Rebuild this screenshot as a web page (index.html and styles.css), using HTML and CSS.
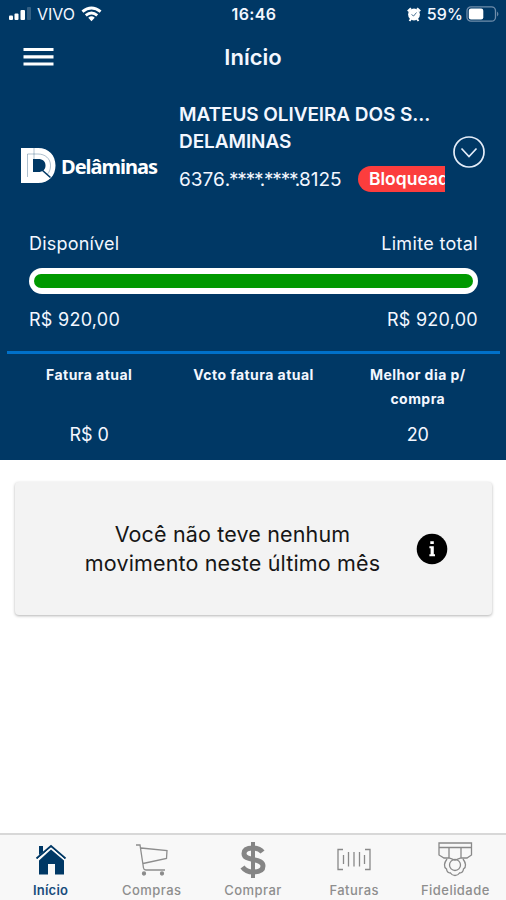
FILE: index.html
```html
<!DOCTYPE html>
<html lang="pt-BR">
<head>
<meta charset="utf-8">
<meta name="viewport" content="width=device-width, initial-scale=1">
<title>Início</title>
<link rel="stylesheet" href="styles.css">
</head>
<body>
<div class="app">
  <header class="hero">
    <div class="status">
      <div class="status-left">
        <svg width="24" height="14" viewBox="0 0 24 14" fill="#fff"><rect x="1" y="8.5" width="4" height="4.5" rx="1"/><rect x="6.5" y="6.5" width="4" height="6.5" rx="1"/><rect x="12.5" y="3" width="4.5" height="10" rx="1"/><rect x="19" y="0" width="4" height="13" rx="1" opacity=".2"/></svg>
        <span class="carrier">VIVO</span>
        <svg class="wifi" width="21" height="16" viewBox="0 0 22 16" fill="none" stroke="#fff" stroke-width="3"><path d="M1.500 5.600Q11-2.200 20.500 5.600"/><path d="M5 9.500Q11 4.400 17 9.500"/><path d="M7.600 11.800Q11 9 14.400 11.800L11 15.500Z" fill="#fff" stroke="none"/></svg>
      </div>
      <span class="time">16:46</span>
      <div class="status-right">
        <svg width="14" height="15" viewBox="0 0 14 15"><circle cx="7" cy="7.500" r="5.900" fill="#fff"/><path d="M.8 4.200L4 1.200M13.200 4.200L10 1.200M2.500 14L4 12M11.500 14L10 12" stroke="#fff" stroke-width="2"/><path d="M4.500 7.500L6.600 9L9.500 5.500" fill="none" stroke="#003865" stroke-width=".7"/></svg>
        <span class="percent">59%</span>
        <svg width="34" height="16" viewBox="0 0 34 16"><rect x="1" y=".8" width="28.500" height="14.400" rx="4" fill="none" stroke="#6f8dab" stroke-width="1.300"/><rect x="2.800" y="2.600" width="14.500" height="10.800" rx="2.200" fill="#fff"/><path d="M31.200 5.500Q33.500 8 31.200 10.500Z" fill="#8098b2"/></svg>
      </div>
    </div>
    <div class="titlebar">
      <svg width="31" height="20" viewBox="0 0 31 20" fill="#fff"><path d="M.5 1h30v3.100H.5zM.5 8.300h30v3.100H.5zM.5 15.500h30v3.100H.5z"/></svg>
      <h1>Início</h1>
    </div>
    <section class="account">
      <div class="brand">
        <svg width="35" height="36" viewBox="0 0 35 36"><path fill="#fff" fill-rule="evenodd" d="M0 0H17C28 0 34.500 7.500 34.500 17.500S28 35 17 35H0ZM12 11V24H17C22 24 24.500 21.500 24.500 17.500S22 11 17 11Z"/><path d="M13 0V11M6.500 29V6H17C24 6 29.500 10.500 29.500 17.500C29.500 21 28.500 24 26.500 26" fill="none" stroke="#003865" stroke-width=".8" opacity=".4"/><path d="M21 22L29.500 29.500" stroke="#003865" stroke-width="1.600"/></svg>
        <span>Delâminas</span>
      </div>
      <div class="holder">
        <strong>MATEUS OLIVEIRA DOS S...</strong>
        <strong>DELAMINAS</strong>
        <div class="card-row"><span class="number">6376<span class="mask">.****.****.</span>8125</span><span class="badge">Bloqueado</span></div>
      </div>
      <svg class="expand" width="34" height="34" viewBox="0 0 34 34" fill="none" stroke="#e4edf9" stroke-width="1.700"><circle cx="17" cy="17" r="15"/><path d="M9.500 13.500L17 21.500L24.500 13.500"/></svg>
    </section>
    <section class="limits">
      <div class="pair"><span>Disponível</span><span class="total">Limite total</span></div>
      <div class="track"><div class="fill"></div></div>
      <div class="pair amounts"><span>R$ 920,00</span><span>R$ 920,00</span></div>
    </section>
    <section class="invoice">
      <div><b>Fatura atual</b><span>R$ 0</span></div>
      <div><b>Vcto fatura atual</b><span></span></div>
      <div><b>Melhor dia p/ compra</b><span>20</span></div>
    </section>
  </header>
  <main>
    <div class="notice">
      <p>Você não teve nenhum<br>movimento neste último mês</p>
      <svg width="32" height="32" viewBox="0 0 32 32"><circle cx="16" cy="16" r="15.300" fill="#000"/><path fill="#fff" d="M14.300 8.300h3.500v2.800h-3.500zM13.400 13.200h4.400v8h1.200v2h-5.600v-2h1.200v-6h-1.200z"/></svg>
    </div>
  </main>
  <nav class="tabs">
    <a class="active">
      <svg width="36" height="38" viewBox="0 0 36 38"><path fill="#003865" d="M6 5h4v6L6 14zM18 8.500L31 19.500V33.500H22V23H15V33.500H6V19.500Z"/><path d="M3.500 17.500L18 5L32.500 17.500" fill="none" stroke="#003865" stroke-width="2"/><path d="M4 19L18 7L32 19" fill="none" stroke="#fff" stroke-width="1"/></svg>
      <span>Início</span></a>
    <a>
      <svg width="36" height="38" viewBox="0 0 36 38" fill="none" stroke="#8d8d8d" stroke-width="1.300"><path d="M2 4H6L9.500 27Q9.800 29 12 29H31M7 7L33 9.500L32.500 17.500L9 22.500"/><circle cx="10" cy="32.500" r="1.500" fill="#888"/><circle cx="28" cy="32.500" r="1.500" fill="#888"/></svg>
      <span>Compras</span></a>
    <a>
      <svg width="36" height="38" viewBox="0 0 36 38" fill="none" stroke="#858585" stroke-width="5"><path d="M27.500 11Q24.500 7 18 7C12 7 9 9 9 12.500C9 16.500 13 17.500 18 18.500C24 19.700 28 21 28 25C28 29 24 31 18 31Q11 31 7.500 26"/><path d="M18 1V37" stroke-width="4"/></svg>
      <span>Comprar</span></a>
    <a>
      <svg width="36" height="38" viewBox="0 0 36 38" fill="none" stroke="#898989" stroke-width="1.300"><path d="M7 8.500H2V28.500H7M29 8.500H34V28.500H29M7.500 14V23M12.500 11V25.500M18 11V25.500M23.500 11V25.500M28.500 14V23"/></svg>
      <span>Faturas</span></a>
    <a>
      <svg width="36" height="38" viewBox="0 0 36 38" fill="none" stroke="#898989" stroke-width="1.300"><path d="M2 2H34.500V14L30 17H24L18 19L12 17H7L2 14ZM2 6.500H34.500M12 6.500V17M24 6.500V17"/><path d="M10 18C7 22 6.500 26 9.500 28Q10 32 13.500 32Q15 34.500 18 34.500Q21 34.500 22.500 32Q26 32 26.500 28C29.500 26 29 22 26 18"/><circle cx="18" cy="24" r="5.500"/></svg>
      <span>Fidelidade</span></a>
  </nav>
</div>
</body>
</html>
```

FILE: styles.css
```css
* { box-sizing: border-box; }
body { margin: 0; font-family: Inter, "Liberation Sans", sans-serif; background: #fff; }
svg { display: block; flex: none; }
.app { height: 900px; display: flex; flex-direction: column; overflow: hidden; }
.hero { background: #003865; color: #f3f7ff; height: 460px; flex: none; }
.status { height: 28px; display: grid; grid-template-columns: 1fr auto 1fr; align-items: center; padding: 0 6px 0 8px; font-size: 17px; }
.status-left, .status-right { display: flex; align-items: center; }
.status-right { justify-content: flex-end; }
.carrier { margin-left: 5px; font-size: 16px; letter-spacing: 0; }
.wifi { margin-left: 6px; }
.time { font-weight: 600; font-size: 16px; letter-spacing: .4px; }
.percent { margin: 0 3px 0 6px; font-size: 16px; font-weight: 500; letter-spacing: .1px; }
.titlebar { height: 58px; display: grid; grid-template-columns: 1fr auto 1fr; align-items: center; padding: 0 23px; }
h1 { margin: 0; font-size: 22px; font-weight: 600; }
.account { height: 142px; display: flex; padding: 15px 20px 0 21px; }
.brand { width: 158px; display: flex; align-items: center; height: 36px; margin-top: 47px; color: #fff; }
.brand span { font: 700 20px "Noto Sans", sans-serif; margin-left: 5px; letter-spacing: -1px; }
.holder { width: 266px; overflow: hidden; }
.holder strong { display: block; font-size: 19px; line-height: 27px; font-weight: 600; letter-spacing: -.08px; white-space: nowrap; }
.card-row { display: flex; align-items: center; margin-top: 11px; height: 26px; }
.number { width: 179px; flex: none; font-size: 19px; }
.mask { letter-spacing: -1.2px; }
.badge { flex: none; background: #fc3d3d; color: #fff; border-radius: 13px; height: 26px; line-height: 26px; padding: 0 12px 0 11px; font-size: 17.500px; font-weight: 600; }
.expand { margin: 34px 0 0 7px; }
.limits { height: 123px; padding: 3px 28px 0 29px; }
.pair { display: flex; justify-content: space-between; font-size: 18px; line-height: 26px; letter-spacing: .2px; }
.total { letter-spacing: .33px; }
.track { height: 26px; border-radius: 13px; background: #fff; margin: 11px 0 13px; padding: 6px 5px; }
.amounts { letter-spacing: .27px; }
.fill { height: 14px; background: #090; border-radius: 7px; }
.invoice { margin: 0 6px 0 7px; border-top: 3px solid #0070c9; display: grid; grid-template-columns: 1fr 1fr 1fr; text-align: center; padding-top: 9px; }
.invoice div { display: flex; flex-direction: column; align-items: center; }
.invoice b { height: 48px; width: 130px; font-size: 14px; line-height: 24px; font-weight: 700; letter-spacing: .45px; white-space: nowrap; }
.invoice div:last-child b { width: 110px; white-space: normal; }
.invoice span { margin-top: 12px; font-size: 18px; line-height: 24px; }
main { flex: 1; padding: 22px 14px 0 15px; }
.notice { height: 133px; background: #f3f3f3; border-radius: 4px; box-shadow: 0 1px 3px rgba(0,0,0,.3); display: flex; align-items: center; padding-left: 60px; color: #161616; }
.notice p { width: 315px; margin: 0; text-align: center; font-size: 21.500px; line-height: 29px; letter-spacing: .15px; }
.notice svg { margin-left: 26px; }
.tabs { height: 67px; background: #f8f8f8; border-top: 2px solid #d8d8d8; display: grid; grid-template-columns: repeat(5, 1fr); color: #8e8e8e; }
.tabs a { display: flex; flex-direction: column; align-items: center; padding-top: 6px; font-size: 13px; font-weight: 500; line-height: 16px; letter-spacing: .45px; }
.tabs span { margin-top: 3px; }
.tabs .active { color: #174c7c; font-weight: 600; letter-spacing: .2px; }
```
